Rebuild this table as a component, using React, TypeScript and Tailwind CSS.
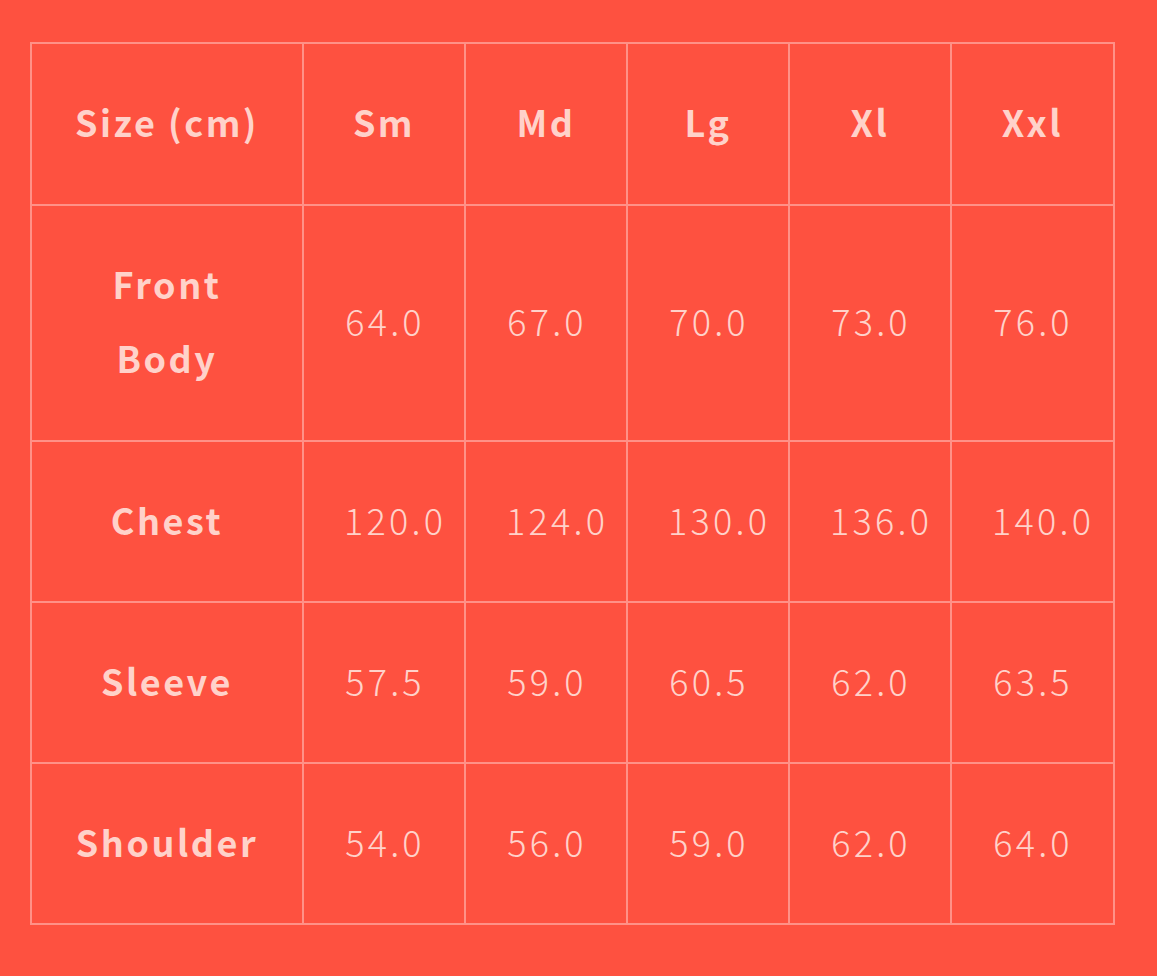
const header = ["Size (cm)", "Sm", "Md", "Lg", "Xl", "Xxl"];

const rows = [
    { label: "Front Body", values: ["64.0", "67.0", "70.0", "73.0", "76.0"] },
    { label: "Chest", values: ["120.0", "124.0", "130.0", "136.0", "140.0"] },
    { label: "Sleeve", values: ["57.5", "59.0", "60.5", "62.0", "63.5"] },
    { label: "Shoulder", values: ["54.0", "56.0", "59.0", "62.0", "64.0"] },
];

export default function App() {
    return (
        <div
            className="min-h-screen w-full bg-[#fe5140] pt-[42px] pl-[30px]"
            style={{ fontFamily: '"Noto Sans CJK JP", "Noto Sans", sans-serif' }}
        >
            <div className="inline-grid grid-cols-[270px_160px_160px_160px_160px_161px] gap-[2px] p-[2px] bg-[#ff9187] text-[#ffd2ca] text-[36px] leading-[74px]">
                {header.map((h) => (
                    <div
                        key={h}
                        className="bg-[#fe5140] flex items-center justify-center text-center font-bold tracking-[0.07em] pt-[40px] pb-[46px] px-10 whitespace-nowrap"
                    >
                        {h}
                    </div>
                ))}

                {rows.map((row, r) => {
                    // first body row keeps the taller padding, the rest are a pixel shorter
                    const pad = r === 0 ? "pt-[40px] pb-[46px]" : "pt-[40px] pb-[45px]";
                    return (
                        <div key={row.label} className="contents">
                            <div className={`bg-[#fe5140] flex items-center justify-center text-center font-bold tracking-[0.07em] px-10 ${pad}`}>
                                {row.label}
                            </div>
                            {row.values.map((v, i) => (
                                <div
                                    key={i}
                                    className={`bg-[#fe5140] flex items-center justify-start pl-10 whitespace-nowrap font-light tracking-[0.09em] ${pad}`}
                                >
                                    <span className="min-w-[82px] text-center">{v}</span>
                                </div>
                            ))}
                        </div>
                    );
                })}
            </div>
        </div>
    );
}
